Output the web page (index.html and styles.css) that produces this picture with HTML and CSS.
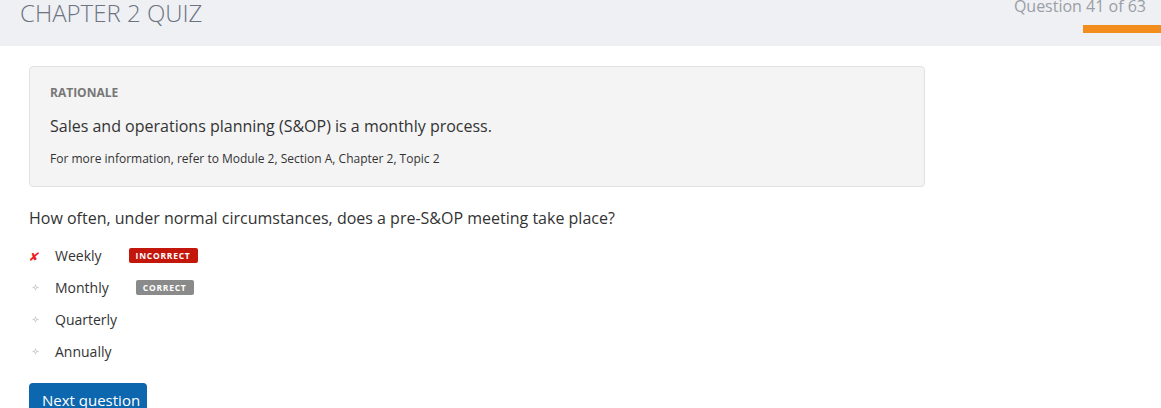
FILE: index.html
```html
<!DOCTYPE html>
<html lang="en">
<head>
<meta charset="utf-8">
<title>Chapter 2 Quiz</title>
<link rel="stylesheet" href="styles.css">
</head>
<body>
<header class="topbar">
  <h1 class="quiz-title">CHAPTER 2 QUIZ</h1>
  <div class="progress">
    <div class="progress-label">Question 41 of 63</div>
    <div class="progress-bar"></div>
  </div>
</header>
<main class="content">
  <section class="rationale">
    <h2 class="rationale-head">RATIONALE</h2>
    <p class="rationale-text">Sales and operations planning (S&amp;OP) is a monthly process.</p>
    <p class="rationale-ref">For more information, refer to Module 2, Section A, Chapter 2, Topic 2</p>
  </section>
  <p class="question">How often, under normal circumstances, does a pre-S&amp;OP meeting take place?</p>
  <ul class="options">
    <li class="option">
      <span class="marker"><span class="cross">&#x2718;</span></span>
      <span class="option-text">Weekly</span>
      <span class="badge badge-incorrect">INCORRECT</span>
    </li>
    <li class="option">
      <span class="marker"><svg class="sparkle" width="7" height="7" viewBox="0 0 7 7"><path d="M3.5 0 L4.4 2.6 L7 3.5 L4.4 4.4 L3.5 7 L2.6 4.4 L0 3.5 L2.6 2.6 Z" fill="#c6c6c6"/><circle cx="3.5" cy="3.5" r="0.9" fill="#ffffff"/></svg></span>
      <span class="option-text">Monthly</span>
      <span class="badge badge-correct">CORRECT</span>
    </li>
    <li class="option">
      <span class="marker"><svg class="sparkle" width="7" height="7" viewBox="0 0 7 7"><path d="M3.5 0 L4.4 2.6 L7 3.5 L4.4 4.4 L3.5 7 L2.6 4.4 L0 3.5 L2.6 2.6 Z" fill="#c6c6c6"/><circle cx="3.5" cy="3.5" r="0.9" fill="#ffffff"/></svg></span>
      <span class="option-text">Quarterly</span>
    </li>
    <li class="option">
      <span class="marker"><svg class="sparkle" width="7" height="7" viewBox="0 0 7 7"><path d="M3.5 0 L4.4 2.6 L7 3.5 L4.4 4.4 L3.5 7 L2.6 4.4 L0 3.5 L2.6 2.6 Z" fill="#c6c6c6"/><circle cx="3.5" cy="3.5" r="0.9" fill="#ffffff"/></svg></span>
      <span class="option-text">Annually</span>
    </li>
  </ul>
  <button class="next-btn" type="button">Next question</button>
</main>
</body>
</html>
```

FILE: styles.css
```css
html, body {
  margin: 0;
  padding: 0;
  background: #ffffff;
}

body {
  font-family: "Open Sans", "Liberation Sans", sans-serif;
  color: #333333;
}

.topbar {
  display: flex;
  justify-content: space-between;
  align-items: flex-start;
  height: 46px;
  background: #eff0f4;
  padding-left: 20px;
  overflow: hidden;
}

.quiz-title {
  margin: 0;
  padding-top: 1px;
  font-size: 24px;
  line-height: 24px;
  font-weight: 300;
  color: #6d7380;
}

.progress {
  display: flex;
  flex-direction: column;
  align-items: flex-end;
  margin-top: -2px;
}

.progress-label {
  font-size: 16px;
  line-height: 16px;
  color: #9a9ea5;
  padding-right: 15px;
}

.progress-bar {
  margin-top: 11px;
  width: 78px;
  height: 8px;
  background: #f28c1c;
}

.content {
  padding: 20px 29px 0;
}

.rationale {
  width: 854px;
  background: #f4f4f4;
  border: 1px solid #e2e2e2;
  border-radius: 4px;
  padding: 18px 20px 19px;
}

.rationale-head {
  margin: 0;
  font-size: 12px;
  line-height: 16px;
  font-weight: 700;
  color: #777777;
}

.rationale-text {
  margin: 14px 0 0;
  font-size: 16px;
  line-height: 22px;
  color: #333333;
}

.rationale-ref {
  margin: 14px 0 0;
  font-size: 12px;
  line-height: 16px;
  color: #333333;
}

.question {
  margin: 20px 0 0;
  font-size: 16px;
  line-height: 22px;
  color: #333333;
}

.options {
  list-style: none;
  margin: 11px 0 0;
  padding: 0;
}

.option {
  display: flex;
  align-items: center;
  height: 32px;
  font-size: 14px;
  line-height: 32px;
}

.marker {
  display: inline-flex;
  align-items: center;
  width: 26px;
  flex: none;
}

.cross {
  color: #ee1b24;
  font-family: "DejaVu Sans", sans-serif;
  font-size: 12px;
  line-height: 12px;
  margin-left: 0;
  margin-top: 2px;
  transform: skewX(-12deg);
}

.sparkle {
  display: block;
  margin-left: 3px;
  margin-top: -1px;
}

.option-text {
  color: #333333;
}

.badge {
  display: inline-block;
  margin-left: 27px;
  height: 15px;
  line-height: 15px;
  padding: 0 7px;
  border-radius: 2px;
  font-size: 8.5px;
  font-weight: 700;
  letter-spacing: 0.75px;
  color: #ffffff;
  margin-top: -2px;
}

.badge-incorrect {
  background: #c4170c;
}

.badge-correct {
  background: #8a8a8a;
}

.next-btn {
  margin-top: 15px;
  display: inline-block;
  width: 118px;
  padding: 6px 0 6px 13px;
  text-align: left;
  border: none;
  border-radius: 4px;
  background: #0c67ae;
  color: #ffffff;
  font-family: "Open Sans", "Liberation Sans", sans-serif;
  font-size: 15px;
  line-height: 22px;
}
```
